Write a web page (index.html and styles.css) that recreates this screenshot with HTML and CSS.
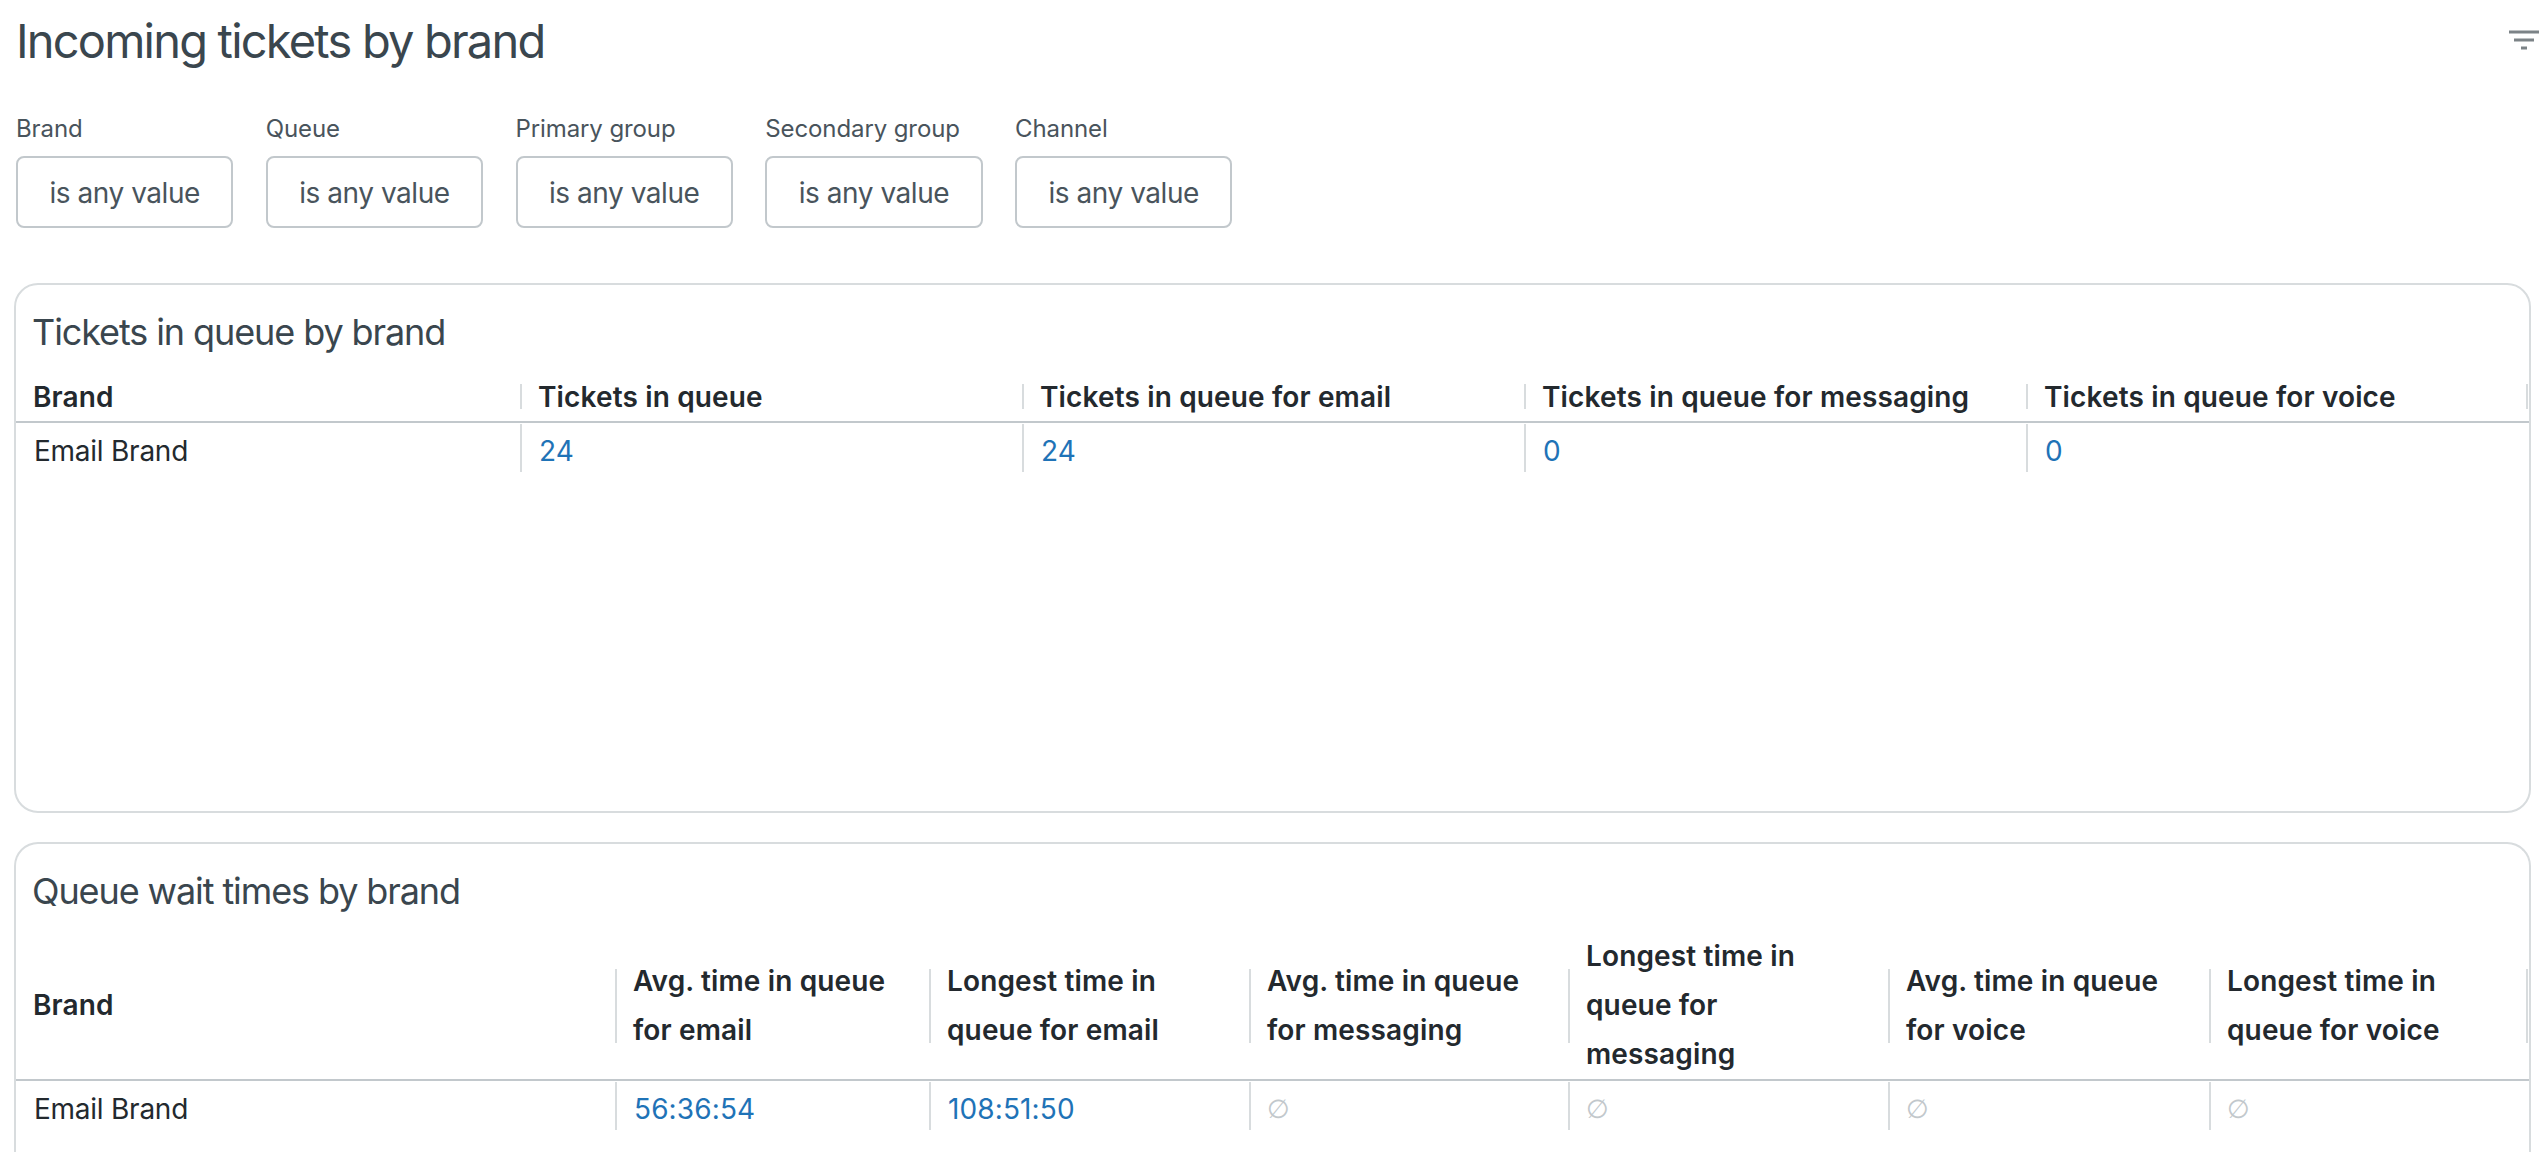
FILE: index.html
```html
<!DOCTYPE html>
<html lang="en">
<head>
<meta charset="utf-8">
<title>Incoming tickets by brand</title>
<link rel="stylesheet" href="styles.css">
</head>
<body>
<header class="top">
  <h1>Incoming tickets by brand</h1>
  <svg class="filter-icon" width="30" height="22" viewBox="0 0 30 22" aria-hidden="true"><path d="M0 2h30M5 10h20M12 18h6" stroke="#7c8387" stroke-width="3" fill="none"/></svg>
</header>
<section class="filters">
  <div class="filter"><label>Brand</label><div class="pill">is any value</div></div>
  <div class="filter"><label>Queue</label><div class="pill">is any value</div></div>
  <div class="filter"><label>Primary group</label><div class="pill">is any value</div></div>
  <div class="filter"><label>Secondary group</label><div class="pill">is any value</div></div>
  <div class="filter"><label>Channel</label><div class="pill">is any value</div></div>
</section>
<section class="card card-one">
  <h2>Tickets in queue by brand</h2>
  <div class="table cols-five">
    <div class="row head">
      <div class="cell first">Brand</div>
      <div class="cell">Tickets in queue</div>
      <div class="cell">Tickets in queue for email</div>
      <div class="cell">Tickets in queue for messaging</div>
      <div class="cell">Tickets in queue for voice</div>
    </div>
    <div class="row body">
      <div class="cell first">Email Brand</div>
      <div class="cell link">24</div>
      <div class="cell link">24</div>
      <div class="cell link">0</div>
      <div class="cell link">0</div>
    </div>
  </div>
</section>
<section class="card card-two">
  <h2>Queue wait times by brand</h2>
  <div class="table cols-seven">
    <div class="row head">
      <div class="cell first">Brand</div>
      <div class="cell">Avg. time in queue for email</div>
      <div class="cell">Longest time in queue for email</div>
      <div class="cell">Avg. time in queue for messaging</div>
      <div class="cell">Longest time in queue for messaging</div>
      <div class="cell">Avg. time in queue for voice</div>
      <div class="cell">Longest time in queue for voice</div>
    </div>
    <div class="row body">
      <div class="cell first">Email Brand</div>
      <div class="cell link">56:36:54</div>
      <div class="cell link">108:51:50</div>
      <div class="cell null">∅</div>
      <div class="cell null">∅</div>
      <div class="cell null">∅</div>
      <div class="cell null">∅</div>
    </div>
  </div>
</section>
</body>
</html>
```
FILE: styles.css
```css
* { box-sizing: border-box; }
html, body { margin: 0; height: 1152px; overflow: hidden; }
body { background: #fff; font-family: Inter, "Liberation Sans", sans-serif; color: #2f3941; padding: 0 13px 0 14px; }

.top { display: flex; justify-content: space-between; align-items: flex-start; height: 116px; }
h1 { margin: 13px 0 0 2px; font-size: 47px; line-height: 56px; font-weight: 400; color: #3a464e; letter-spacing: -1.8px; }
.filter-icon { margin: 30px -8px 0 0; }

.filters { display: flex; gap: 32.5px; padding-left: 2px; height: 167px; }
.filter { width: 217.25px; }
.filter label { display: block; font-size: 24px; line-height: 26px; color: #49545c; margin-bottom: 14px; letter-spacing: -0.1px; }
.pill { width: 100%; height: 72px; padding-top: 2px; border: 2px solid #c2c8cc; border-radius: 8px; display: flex; align-items: center; justify-content: center; font-size: 28px; color: #49545c; letter-spacing: -0.45px; }

.card { border: 2px solid #d8dcde; border-radius: 24px; }
.card-one { height: 530px; margin-bottom: 29px; }
.card-two { height: 340px; border-bottom: 0; border-radius: 24px 24px 0 0; }
h2 { margin: 0; padding: 25px 0 0 16px; font-size: 36px; font-weight: 400; color: #3a464e; line-height: 44px; letter-spacing: -1.1px; }

.table { display: flex; flex-direction: column; }
.row { display: grid; }
.cols-five .row { grid-template-columns: 504px 502px 502px 502px 502px; }
.cols-seven .row { grid-template-columns: 599px 314px 320px 319px 320px 321px 319px; }

.cell { border-left: 2px solid #d8dcde; padding: 0 16px; font-size: 28px; color: #23292e; }
.cell.first { border-left: 0; padding-left: 16px; }
.head { border-bottom: 2px solid #c2c8cc; }
.head .cell { font-weight: 600; letter-spacing: 0.14px; }
.head .first { padding-left: 17px; }
.head .cell:last-child { border-right: 2px solid #d8dcde; }

.cols-five .head { margin-top: 30px; height: 39px; align-items: start; }
.cols-five .head .cell { height: 25px; line-height: 26px; }

.cols-seven .head { margin-top: 19px; height: 149px; align-items: center; }
.cols-seven .head .cell { height: 74px; display: flex; align-items: center; line-height: 49px; padding-right: 20px; }

.body { height: 56px; padding-top: 1px; }
.body .cell { height: 48px; display: flex; align-items: center; padding-top: 5px; }
.body .first { padding-left: 18px; letter-spacing: -0.25px; }
.link { color: #1f73b7; padding-left: 17px; letter-spacing: 0.12px; }
.null { color: #c2c8cc; font-family: "DejaVu Sans", sans-serif; font-size: 26px; padding-left: 16px; }
```
